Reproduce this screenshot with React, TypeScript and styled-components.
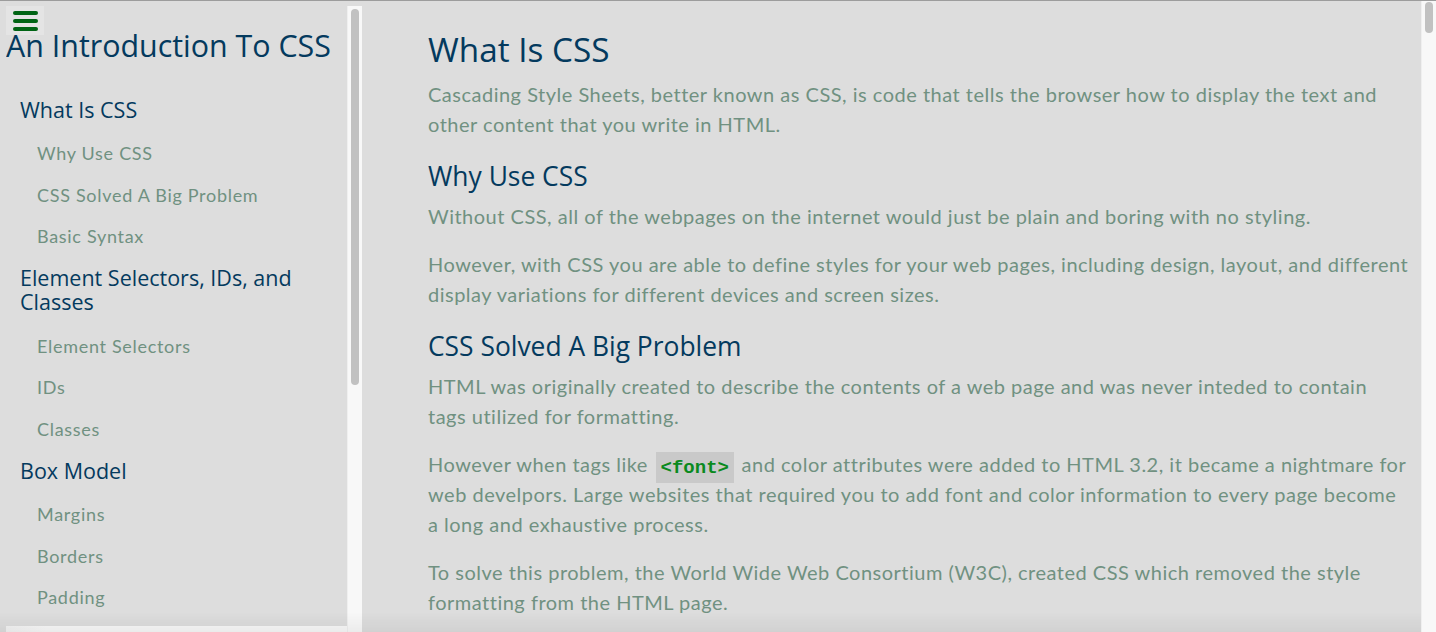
import React from "react";
import styled, { createGlobalStyle } from "styled-components";

const GlobalStyle = createGlobalStyle`
  html, body {
    margin: 0;
    padding: 0;
    height: 100%;
    overflow: hidden;
  }
  body {
    background: #dddddd;
    border-top: 1px solid #9c9c9c;
    box-sizing: border-box;
  }
  #root { height: 100%; }
`;

const HEAD_FONT = `"Open Sans", "Noto Sans", sans-serif`;
const BODY_FONT = `"Lato", "Noto Sans", sans-serif`;
const NAVY = "#043a5e";
const SAGE = "#709181";
const TRACK = "#f8f8f8";
const THUMB = "#c1c1c1";

const Shell = styled.div`
  display: flex;
  align-items: flex-start;
  height: 100%;
`;

/* Sidebar: content cell + drawn scrollbars (vertical, horizontal, corner) */
const Sidebar = styled.aside`
  flex: 0 0 356px;
  display: grid;
  grid-template-columns: 341px 15px;
  grid-template-rows: 620px 15px;
  margin: 5px 0 0 6px;
`;

const SidebarContent = styled.div`
  overflow: hidden;
`;

const VTrack = styled.div`
  background: ${TRACK};
  border-left: 1px solid #efefef;
  display: flex;
  flex-direction: column;
  padding: 3px 3px 0 3px;
`;

const VThumb = styled.div<{ $len: number }>`
  height: ${(p) => p.$len}px;
  border-radius: 4px;
  background: ${THUMB};
`;

const HTrack = styled.div`
  background: linear-gradient(to right, #f2f2f2, ${TRACK} 40px);
`;

const Corner = styled.div`
  background: ${TRACK};
  border-left: 1px solid #efefef;
`;

const MenuButton = styled.button`
  display: flex;
  flex-direction: column;
  justify-content: center;
  gap: 4px;
  width: 38px;
  height: 29px;
  padding: 0 0 0 7px;
  margin: 0;
  border: none;
  background: #e4e4e4;
  cursor: pointer;
`;

const Bar = styled.span`
  display: block;
  width: 25px;
  height: 4px;
  border-radius: 2px;
  background: #006414;
`;

const Title = styled.h1`
  margin: 0;
  font-family: ${HEAD_FONT};
  font-weight: 400;
  font-size: 30.4px;
  line-height: 22px;
  color: ${NAVY};
  white-space: nowrap;
`;

const NavList = styled.ul`
  list-style: none;
  margin: 31px 0 0;
  padding: 0;
`;

const NavItem = styled.li<{ $sub?: boolean }>`
  padding: ${(p) => (p.$sub ? "9px 0 8.5px 31px" : "9.5px 0 10.5px 14px")};
  font-family: ${(p) => (p.$sub ? BODY_FONT : HEAD_FONT)};
  font-size: ${(p) => (p.$sub ? "18px" : "21.5px")};
  letter-spacing: ${(p) => (p.$sub ? "0.7px" : "0")};
  line-height: 24px;
  color: ${(p) => (p.$sub ? SAGE : NAVY)};
  max-width: 290px;
`;

const Main = styled.main`
  flex: 1;
  height: 100%;
  display: flex;
  min-width: 0;
`;

const Article = styled.article`
  flex: 1;
  min-width: 0;
  overflow: hidden;
  padding: 28px 12px 0 66px;
`;

const PageTrack = styled.div`
  flex: 0 0 15px;
  background: ${TRACK};
  border-left: 1px solid #efefef;
  box-sizing: border-box;
  padding: 1px 3px 0 3px;
`;

const PageThumb = styled.div`
  height: 31px;
  border-radius: 4px;
  background: ${THUMB};
`;

const H1 = styled.h1`
  margin: 0 0 10px;
  font-family: ${HEAD_FONT};
  font-weight: 400;
  font-size: 33.3px;
  line-height: 40px;
  color: ${NAVY};
`;

const H2 = styled.h2`
  margin: 22px 0 10px;
  font-family: ${HEAD_FONT};
  font-weight: 400;
  font-size: 26.4px;
  line-height: 30px;
  color: ${NAVY};
`;

const P = styled.p`
  margin: 0 0 18px;
  font-family: ${BODY_FONT};
  font-size: 20px;
  letter-spacing: 0.5px;
  line-height: 30px;
  color: ${SAGE};
`;

const Code = styled.code`
  padding: 4.5px 5px;
  margin: 0 2px;
  line-height: 24px;
  background: #c9c9c9;
  font-family: "Liberation Mono", monospace;
  font-weight: 700;
  font-size: 19px;
  letter-spacing: 0;
  color: #0a8a1e;
`;

const BottomShade = styled.div`
  position: fixed;
  left: 0;
  right: 15px;
  bottom: 0;
  height: 20px;
  pointer-events: none;
  background: linear-gradient(to bottom, rgba(0, 0, 0, 0), rgba(0, 0, 0, 0.05));
`;

type Entry = { label: string; sub?: boolean };

const nav: Entry[] = [
  { label: "What Is CSS" },
  { label: "Why Use CSS", sub: true },
  { label: "CSS Solved A Big Problem", sub: true },
  { label: "Basic Syntax", sub: true },
  { label: "Element Selectors, IDs, and Classes" },
  { label: "Element Selectors", sub: true },
  { label: "IDs", sub: true },
  { label: "Classes", sub: true },
  { label: "Box Model" },
  { label: "Margins", sub: true },
  { label: "Borders", sub: true },
  { label: "Padding", sub: true },
];

export default function App() {
  return (
    <>
      <GlobalStyle />
      <Shell>
        <Sidebar>
          <SidebarContent>
            <MenuButton aria-label="Menu">
              <Bar />
              <Bar />
              <Bar />
            </MenuButton>
            <Title>An Introduction To CSS</Title>
            <NavList>
              {nav.map((n) => (
                <NavItem key={n.label} $sub={n.sub}>
                  {n.label}
                </NavItem>
              ))}
            </NavList>
          </SidebarContent>
          <VTrack>
            <VThumb $len={376} />
          </VTrack>
          <HTrack />
          <Corner />
        </Sidebar>
        <Main>
          <Article>
            <H1>What Is CSS</H1>
            <P>
              Cascading Style Sheets, better known as CSS, is code that tells the browser how to
              display the text and other content that you write in HTML.
            </P>
            <H2>Why Use CSS</H2>
            <P>
              Without CSS, all of the webpages on the internet would just be plain and boring with
              no styling.
            </P>
            <P>
              However, with CSS you are able to define styles for your web pages, including design,
              layout, and different display variations for different devices and screen sizes.
            </P>
            <H2>CSS Solved A Big Problem</H2>
            <P>
              HTML was originally created to describe the contents of a web page and was never
              inteded to contain tags utilized for formatting.
            </P>
            <P>
              However when tags like <Code>&lt;font&gt;</Code> and color attributes were added to
              HTML 3.2, it became a nightmare for web develpors. Large websites that required you to
              add font and color information to every page become a long and exhaustive process.
            </P>
            <P>
              To solve this problem, the World Wide Web Consortium (W3C), created CSS which removed
              the style formatting from the HTML page.
            </P>
          </Article>
          <PageTrack>
            <PageThumb />
          </PageTrack>
        </Main>
        <BottomShade />
      </Shell>
    </>
  );
}
